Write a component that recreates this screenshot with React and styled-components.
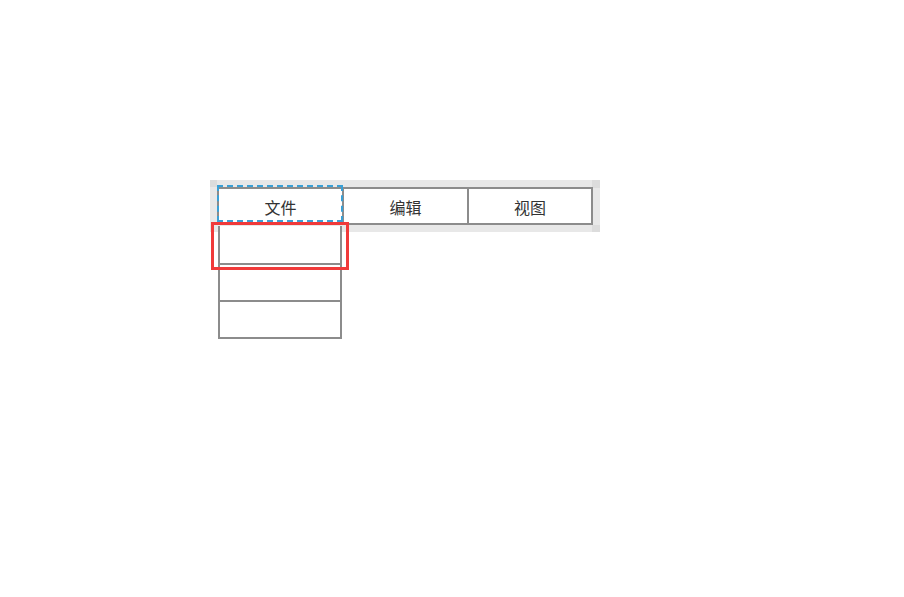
import React from "react";
import styled, { createGlobalStyle } from "styled-components";

const GlobalStyle = createGlobalStyle`
  html, body {
    margin: 0;
    padding: 0;
    background: #ffffff;
  }
  body {
    font-family: "Noto Sans CJK SC", "Noto Sans", sans-serif;
  }
`;

const Page = styled.div`
  box-sizing: border-box;
  min-height: 597px;
  padding: 180px 0 0 210px;
`;

const MenuBar = styled.div`
  position: relative;
  box-sizing: border-box;
  width: 390px;
  height: 52px;
  padding: 7px;
  background:
    linear-gradient(#dcdcdc, #dcdcdc) left top / 7px 7px no-repeat,
    linear-gradient(#dcdcdc, #dcdcdc) right top / 8px 8px no-repeat,
    linear-gradient(#dcdcdc, #dcdcdc) right bottom / 8px 7px no-repeat,
    #e8e8e8;
`;

const TabRow = styled.div`
  display: flex;
  height: 38px;
  background: #ffffff;
`;

const Tab = styled.div`
  position: relative;
  box-sizing: border-box;
  flex: 0 0 ${(p) => p.$width}px;
  margin-left: ${(p) => (p.$first ? 0 : -2)}px;
  display: flex;
  align-items: center;
  justify-content: center;
  padding-top: 1px;
  border: 2px solid #8c8c8c;
  color: #333333;
  font-size: 16px;
  z-index: ${(p) => (p.$active ? 1 : 0)};

  &::after {
    content: "";
    display: ${(p) => (p.$active ? "block" : "none")};
    position: absolute;
    left: -2px;
    top: -4px;
    width: 126px;
    height: 37px;
    box-sizing: border-box;
    border: 2px dashed #3aa0d6;
  }
`;

const Dropdown = styled.div`
  position: absolute;
  left: 8px;
  top: 46px;
  box-sizing: border-box;
  width: 124px;
  border: 2px solid #8c8c8c;
  border-top: none;
  background: #ffffff;
  display: flex;
  flex-direction: column;
`;

const Item = styled.div`
  height: ${(p) => (p.$first ? 37 : 35)}px;
  border-bottom: ${(p) => (p.$last ? "none" : "2px solid #8c8c8c")};
`;

const Highlight = styled.div`
  position: absolute;
  left: 1px;
  top: 42px;
  box-sizing: border-box;
  width: 138px;
  height: 48px;
  border: 3px solid #f03a3a;
  pointer-events: none;
  z-index: 2;
`;

const tabs = [
  { label: "文件", width: 127, active: true },
  { label: "编辑", width: 127 },
  { label: "视图", width: 126 },
];

export default function App() {
  return (
    <Page>
      <GlobalStyle />
      <MenuBar>
        <TabRow>
          {tabs.map((t, i) => (
            <Tab key={t.label} $width={t.width} $first={i === 0} $active={t.active}>
              {t.label}
            </Tab>
          ))}
        </TabRow>
        <Dropdown>
          <Item $first />
          <Item />
          <Item $last />
        </Dropdown>
        <Highlight />
      </MenuBar>
    </Page>
  );
}
